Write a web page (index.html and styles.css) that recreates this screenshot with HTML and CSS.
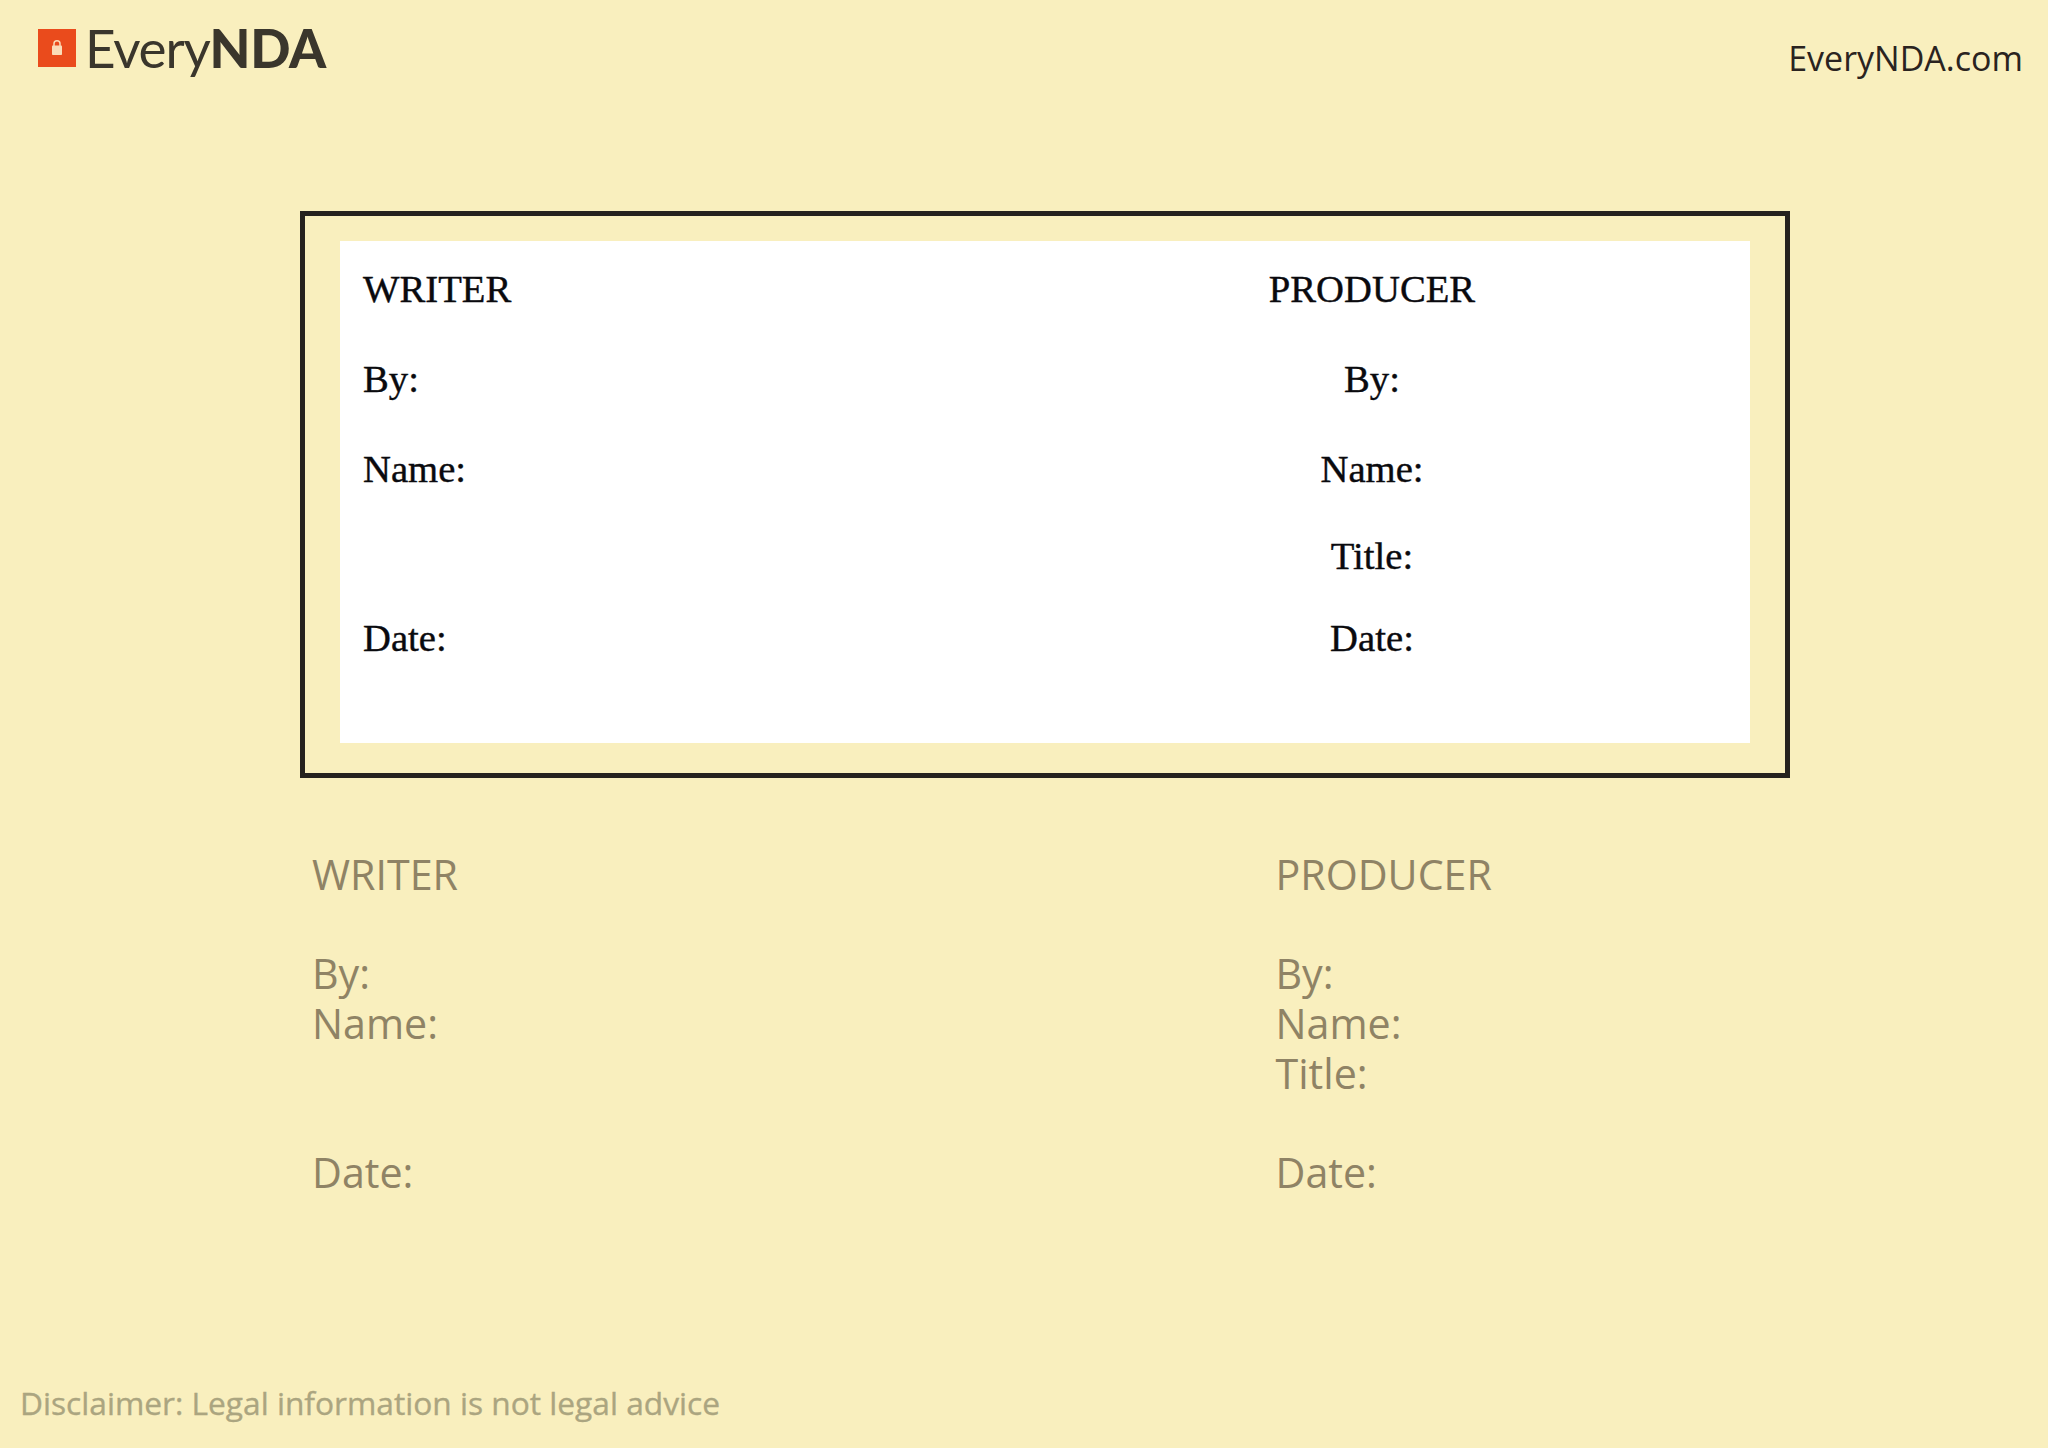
FILE: index.html
```html
<!DOCTYPE html>
<html lang="en">
<head>
<meta charset="utf-8">
<title>EveryNDA</title>
<link rel="stylesheet" href="styles.css">
</head>
<body>
<div class="page">
  <header class="header">
    <div class="logo">
      <svg class="logo-mark" viewBox="0 0 38 38" aria-hidden="true">
        <rect width="38" height="38" fill="#ea4b1c"/>
        <path d="M16 17v-2.3a3 3 0 0 1 6 0V17" fill="none" stroke="#fbdcb8" stroke-width="1.5"/>
        <rect x="14" y="16.5" width="10" height="9.5" rx="0.8" fill="#fbdcb8"/>
      </svg>
      <span class="logo-text">Every<b>NDA</b></span>
    </div>
    <div class="site">EveryNDA.com</div>
  </header>
  <section class="frame">
    <div class="sheet">
      <div class="sheet-cell">WRITER</div><div class="sheet-cell center">PRODUCER</div>
      <div class="sheet-cell">By:</div><div class="sheet-cell center">By:</div>
      <div class="sheet-cell">Name:</div><div class="sheet-cell center">Name:</div>
      <div class="sheet-cell"></div><div class="sheet-cell center">Title:</div>
      <div class="sheet-cell">Date:</div><div class="sheet-cell center">Date:</div>
    </div>
  </section>
  <section class="sign">
    <div class="sign-col">
      <p class="sign-head">WRITER</p>
      <p>By:</p>
      <p>Name:</p>
      <p class="blank">&nbsp;</p>
      <p>Date:</p>
    </div>
    <div class="sign-col">
      <p class="sign-head">PRODUCER</p>
      <p>By:</p>
      <p>Name:</p>
      <p>Title:</p>
      <p>Date:</p>
    </div>
  </section>
  <footer class="footer">Disclaimer: Legal information is not legal advice</footer>
</div>
</body>
</html>
```
FILE: styles.css
```css
* { box-sizing: border-box; }
html, body { margin: 0; padding: 0; }
body { background: #f9efbe; }
.page {
  width: 2048px;
  height: 1448px;
  display: flex;
  flex-direction: column;
  background: #f9efbe;
  overflow: hidden;
}
.header {
  height: 211px;
  padding: 29px 25px 0 38px;
  display: flex;
  justify-content: space-between;
  align-items: flex-start;
}
.logo { display: flex; align-items: flex-start; gap: 9px; }
.logo-mark { width: 38px; height: 38px; display: block; }
.logo-text {
  font-family: "Lato", sans-serif;
  font-size: 53px;
  line-height: 38px;
  color: #3a362c;
  font-weight: 400;
  letter-spacing: -1.2px;
}
.logo-text b { font-weight: 900; letter-spacing: -0.4px; }
.site {
  font-family: "Open Sans", sans-serif;
  font-size: 34px;
  line-height: 46px;
  margin-top: 6px;
  color: #2a2320;
}
.frame {
  width: 1490px;
  height: 567px;
  margin-left: 300px;
  border: 5px solid #26221e;
  padding: 24.5px 35px 30px 35px;
}
.sheet {
  height: 100%;
  background: #fff;
  padding-top: 26px;
  display: grid;
  grid-template-columns: 654px 756px;
  grid-template-rows: 90px 90px 87px 82px 1fr;
  font-family: "Liberation Serif", serif;
  font-size: 38.7px;
  line-height: 45px;
  color: #0a0a0e;
  -webkit-text-stroke: 0.4px #0a0a0e;
}
.sheet-cell { padding-left: 23px; }
.sheet-cell.center { padding-left: 0; text-align: center; }
.sign {
  margin-top: 72px;
  padding-left: 312px;
  display: grid;
  grid-template-columns: 963.5px 1fr;
  font-family: "Open Sans", sans-serif;
  font-size: 41.2px;
  line-height: 49.7px;
  color: #8f8365;
}
.sign p { margin: 0; }
.sign .sign-head { margin-bottom: 49.7px; }
.sign .sign-col p:last-child { margin-top: 49.7px; }
.footer {
  margin-top: auto;
  padding: 0 0 0 20px;
  height: 65px;
  font-family: "Open Sans", sans-serif;
  font-size: 31.7px;
  line-height: 40px;
  color: #aba580;
  -webkit-text-stroke: 0.35px #aba580;
}
```
